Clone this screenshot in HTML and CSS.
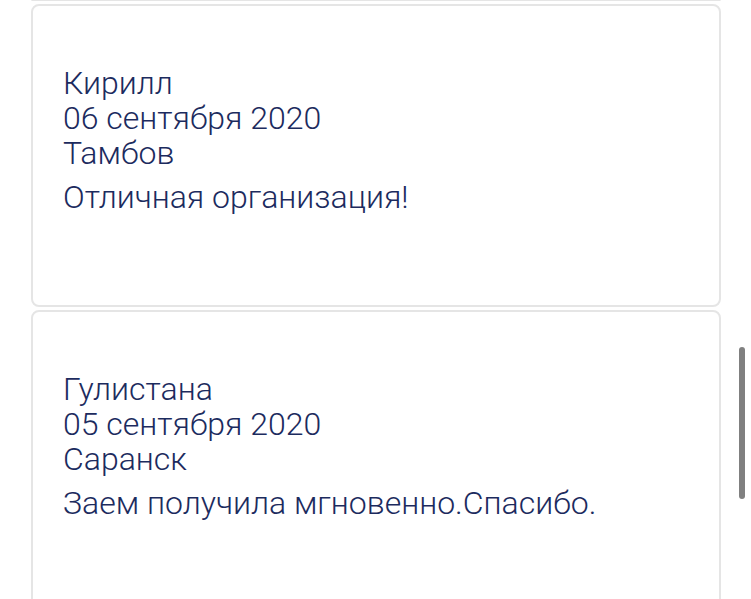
FILE: index.html
```html
<!DOCTYPE html>
<html lang="ru">
<head>
<meta charset="utf-8">
<title>Отзывы</title>
<link rel="stylesheet" href="styles.css">
</head>
<body>
<div class="page">
  <div class="list">
    <div class="card card--cut"></div>
    <div class="card">
      <div class="meta">
        <div class="line">Кирилл</div>
        <div class="line">06 сентября 2020</div>
        <div class="line">Тамбов</div>
      </div>
      <p class="text">Отличная организация!</p>
    </div>
    <div class="card">
      <div class="meta">
        <div class="line">Гулистана</div>
        <div class="line">05 сентября 2020</div>
        <div class="line">Саранск</div>
      </div>
      <p class="text">Заем получила мгновенно.Спасибо.</p>
    </div>
  </div>
  <div class="scrollbar"></div>
</div>
</body>
</html>
```
FILE: styles.css
```css
html, body {
  margin: 0;
  padding: 0;
  background: #ffffff;
  height: 599px;
  overflow: hidden;
}
.page {
  position: relative;
  height: 599px;
  overflow: hidden;
}
.list {
  display: flex;
  flex-direction: column;
  gap: 3px;
  width: 690px;
  margin-left: 31px;
  font-family: Roboto, "Noto Sans", sans-serif;
  font-weight: 300;
  font-size: 32px;
  line-height: 35px;
  color: #1c2b5e;
}
.card {
  border: 2px solid #e5e5e5;
  border-radius: 8px;
  padding: 60px 30px 90px 30px;
  background: #fff;
}
.card--cut {
  border-top: none;
  border-radius: 0 0 8px 8px;
  height: 0;
  padding: 0;
  margin-top: -1px;
}
.text {
  margin: 9px 0 0 0;
}
.scrollbar {
  position: absolute;
  left: 739px;
  top: 347px;
  width: 6px;
  height: 152px;
  border-radius: 3px;
  background: #808080;
}
```
